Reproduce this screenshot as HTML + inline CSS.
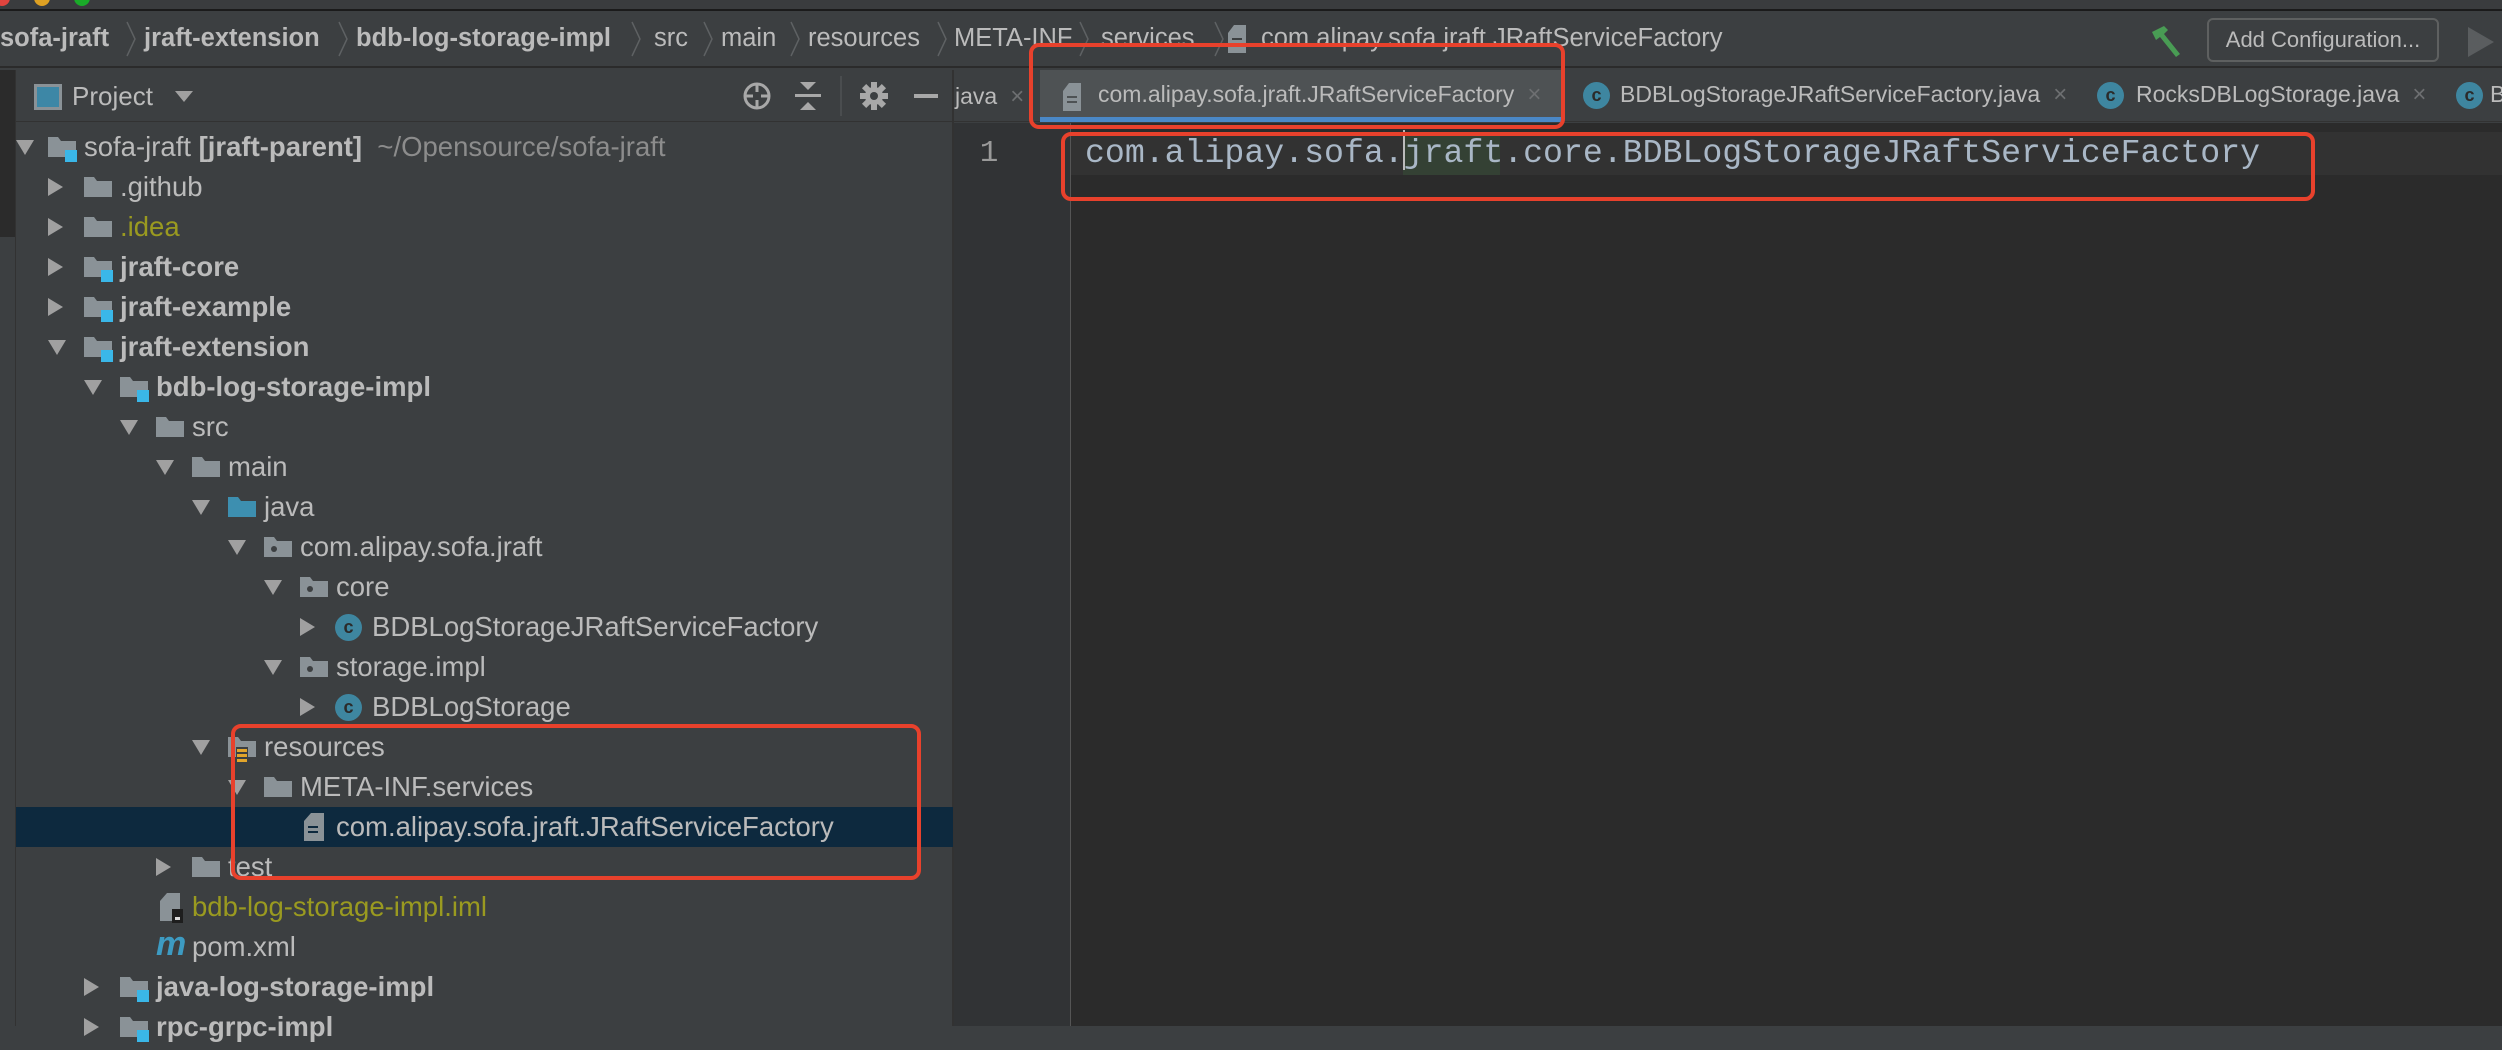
<!DOCTYPE html>
<html><head><meta charset="utf-8"><style>
*{margin:0;padding:0;box-sizing:border-box}
body{width:2502px;height:1026px;overflow:hidden;background:#3c3f41;font-family:"Liberation Sans",sans-serif;color:#bbbbbb;position:relative}
.a{position:absolute;white-space:nowrap}
.bc{font-size:25.5px;top:23px;line-height:30px}
.b{font-weight:bold}
.chev{position:absolute;top:20px;width:12px;height:38px}
.row{position:absolute;left:16px;width:937px;height:40px}
.t{position:absolute;font-size:27.5px;line-height:40px;top:0;white-space:nowrap}
.arrow{position:absolute;top:12px;width:0;height:0}
.down{border-left:9px solid transparent;border-right:9px solid transparent;border-top:15px solid #a0a0a0;top:13px}
.right{border-top:9px solid transparent;border-bottom:9px solid transparent;border-left:15px solid #a0a0a0;top:11px}
.fold{position:absolute;top:10px;width:28px;height:20px}
.cic{position:absolute;top:7px;width:27px;height:27px;border-radius:50%;background:#3e86a0;color:#2b2b2b;font-size:18px;line-height:27px;text-align:center;font-weight:bold}
.red{position:absolute;border:4px solid #e8412c;border-radius:10px}
.tab{position:absolute;top:70px;height:52px;font-size:23px;line-height:52px;white-space:nowrap}
.x{color:#6d6f71;font-size:24px}
</style></head><body>
<div class="a" style="left:0;top:0;width:2502px;height:11px;background:#3a3c3e;border-bottom:2px solid #1b1b1b"></div>
<div class="a" style="left:-6px;top:-10px;width:16px;height:16px;border-radius:50%;background:#e0443e"></div>
<div class="a" style="left:34px;top:-10px;width:16px;height:16px;border-radius:50%;background:#dea123"></div>
<div class="a" style="left:74px;top:-10px;width:16px;height:16px;border-radius:50%;background:#1aab29"></div>
<div class="a" style="left:0;top:13px;width:2502px;height:55px;background:#3c3f41;border-bottom:2px solid #2b2b2b"></div>
<div class="a bc b" style="left:0">sofa-jraft</div>
<svg class="chev" style="left:125px"><path d="M2 2 L10 19 L2 36" stroke="#5e6163" stroke-width="1.5" fill="none"/></svg>
<div class="a bc b" style="left:144px">jraft-extension</div>
<svg class="chev" style="left:337px"><path d="M2 2 L10 19 L2 36" stroke="#5e6163" stroke-width="1.5" fill="none"/></svg>
<div class="a bc b" style="left:356px">bdb-log-storage-impl</div>
<svg class="chev" style="left:630px"><path d="M2 2 L10 19 L2 36" stroke="#5e6163" stroke-width="1.5" fill="none"/></svg>
<div class="a bc" style="left:654px">src</div>
<svg class="chev" style="left:702px"><path d="M2 2 L10 19 L2 36" stroke="#5e6163" stroke-width="1.5" fill="none"/></svg>
<div class="a bc" style="left:721px">main</div>
<svg class="chev" style="left:789px"><path d="M2 2 L10 19 L2 36" stroke="#5e6163" stroke-width="1.5" fill="none"/></svg>
<div class="a bc" style="left:808px">resources</div>
<svg class="chev" style="left:936px"><path d="M2 2 L10 19 L2 36" stroke="#5e6163" stroke-width="1.5" fill="none"/></svg>
<div class="a bc" style="left:954px">META-INF</div>
<svg class="chev" style="left:1078px"><path d="M2 2 L10 19 L2 36" stroke="#5e6163" stroke-width="1.5" fill="none"/></svg>
<div class="a bc" style="left:1101px">services</div>
<svg class="chev" style="left:1213px"><path d="M2 2 L10 19 L2 36" stroke="#5e6163" stroke-width="1.5" fill="none"/></svg>
<svg class="a" style="left:1228px;top:25px" width="18" height="28"><path d="M6 0 H18 V28 H0 V8 Z" fill="#8a9297"/><rect x="4" y="13" width="10" height="2" fill="#3c3f41"/><rect x="4" y="18" width="10" height="2" fill="#3c3f41"/></svg>
<div class="a bc" style="left:1261px">com.alipay.sofa.jraft.JRaftServiceFactory</div>
<svg class="a" style="left:2150px;top:24px" width="36" height="34"><path d="M2 8 L14 2 L18 6 L14 10 L30 30 L26 33 L10 13 L6 16 Z" fill="#499c54"/></svg>
<div class="a" style="left:2207px;top:18px;width:232px;height:44px;border:2px solid #5e6060;border-radius:6px;font-size:22px;line-height:40px;text-align:center;color:#bbbbbb">Add Configuration...</div>
<svg class="a" style="left:2468px;top:27px" width="26" height="30"><path d="M0 0 L26 15 L0 30 Z" fill="#5a5d5f"/></svg>

<div class="a" style="left:0;top:70px;width:16px;height:956px;background:#3c3f41;border-right:1px solid #323232"></div>
<div class="a" style="left:0;top:70px;width:15px;height:167px;background:#2b2b2b"></div>
<div class="a" style="left:16px;top:70px;width:937px;height:52px;background:#3c3f41;border-bottom:1px solid #323232"></div>
<div class="a" style="left:34px;top:84px;width:28px;height:26px;border:3px solid #8a9297;background:#3d87a6"></div>
<div class="a" style="left:72px;top:81px;font-size:26px;line-height:30px">Project</div>
<svg class="a" style="left:175px;top:91px" width="18" height="12"><path d="M0 0 H18 L9 11 Z" fill="#a0a0a0"/></svg>
<svg class="a" style="left:742px;top:81px" width="30" height="30"><circle cx="15" cy="15" r="12" stroke="#a8a8a8" stroke-width="3" fill="none"/><path d="M15 3 V11 M15 19 V27 M3 15 H11 M19 15 H27" stroke="#a8a8a8" stroke-width="3"/></svg>
<svg class="a" style="left:795px;top:82px" width="26" height="28"><path d="M5 0 H21 L13 8 Z M5 28 H21 L13 20 Z" fill="#a8a8a8"/><rect x="0" y="12" width="26" height="3" fill="#a8a8a8"/></svg>
<div class="a" style="left:840px;top:76px;width:2px;height:40px;background:#4a4d4f"></div>
<svg class="a" style="left:860px;top:82px" width="28" height="28"><g fill="#a8a8a8"><circle cx="14" cy="14" r="9"/><rect x="11" y="0" width="6" height="28"/><rect x="0" y="11" width="28" height="6"/><rect x="11" y="0" width="6" height="28" transform="rotate(45 14 14)"/><rect x="11" y="0" width="6" height="28" transform="rotate(-45 14 14)"/></g><circle cx="14" cy="14" r="4" fill="#3c3f41"/></svg>
<div class="a" style="left:914px;top:94px;width:24px;height:4px;background:#a8a8a8"></div>
<div class="a" style="left:952px;top:70px;width:2px;height:956px;background:#323232"></div>

<div class="a" style="left:16px;top:807px;width:937px;height:40px;background:#0d293e"></div>

<div class="row" style="top:127px"><div class="arrow down" style="left:0px"></div><div class="fold" style="left:32px"><svg width="30" height="28"><path d="M0 0 H10 L13 4 H28 V20 H0 Z" fill="#8a9297"/><rect x="17" y="13" width="12" height="12" fill="#3ab7e8"/></svg></div><div class="t" style="left:68px">sofa-jraft <b>[jraft-parent]</b> <span style="color:#8c8c8c">&nbsp;~/Opensource/sofa-jraft</span></div></div>
<div class="row" style="top:167px"><div class="arrow right" style="left:32px"></div><div class="fold" style="left:68px"><svg width="28" height="20"><path d="M0 0 H10 L13 4 H28 V20 H0 Z" fill="#8a9297"/></svg></div><div class="t" style="left:104px">.github</div></div>
<div class="row" style="top:207px"><div class="arrow right" style="left:32px"></div><div class="fold" style="left:68px"><svg width="28" height="20"><path d="M0 0 H10 L13 4 H28 V20 H0 Z" fill="#8a9297"/></svg></div><div class="t" style="left:104px;color:#9a9a20">.idea</div></div>
<div class="row" style="top:247px"><div class="arrow right" style="left:32px"></div><div class="fold" style="left:68px"><svg width="30" height="28"><path d="M0 0 H10 L13 4 H28 V20 H0 Z" fill="#8a9297"/><rect x="17" y="13" width="12" height="12" fill="#3ab7e8"/></svg></div><div class="t b" style="left:104px">jraft-core</div></div>
<div class="row" style="top:287px"><div class="arrow right" style="left:32px"></div><div class="fold" style="left:68px"><svg width="30" height="28"><path d="M0 0 H10 L13 4 H28 V20 H0 Z" fill="#8a9297"/><rect x="17" y="13" width="12" height="12" fill="#3ab7e8"/></svg></div><div class="t b" style="left:104px">jraft-example</div></div>
<div class="row" style="top:327px"><div class="arrow down" style="left:32px"></div><div class="fold" style="left:68px"><svg width="30" height="28"><path d="M0 0 H10 L13 4 H28 V20 H0 Z" fill="#8a9297"/><rect x="17" y="13" width="12" height="12" fill="#3ab7e8"/></svg></div><div class="t b" style="left:104px">jraft-extension</div></div>
<div class="row" style="top:367px"><div class="arrow down" style="left:68px"></div><div class="fold" style="left:104px"><svg width="30" height="28"><path d="M0 0 H10 L13 4 H28 V20 H0 Z" fill="#8a9297"/><rect x="17" y="13" width="12" height="12" fill="#3ab7e8"/></svg></div><div class="t b" style="left:140px">bdb-log-storage-impl</div></div>
<div class="row" style="top:407px"><div class="arrow down" style="left:104px"></div><div class="fold" style="left:140px"><svg width="28" height="20"><path d="M0 0 H10 L13 4 H28 V20 H0 Z" fill="#8a9297"/></svg></div><div class="t" style="left:176px">src</div></div>
<div class="row" style="top:447px"><div class="arrow down" style="left:140px"></div><div class="fold" style="left:176px"><svg width="28" height="20"><path d="M0 0 H10 L13 4 H28 V20 H0 Z" fill="#8a9297"/></svg></div><div class="t" style="left:212px">main</div></div>
<div class="row" style="top:487px"><div class="arrow down" style="left:176px"></div><div class="fold" style="left:212px"><svg width="28" height="20"><path d="M0 0 H10 L13 4 H28 V20 H0 Z" fill="#3d8fb0"/></svg></div><div class="t" style="left:248px">java</div></div>
<div class="row" style="top:527px"><div class="arrow down" style="left:212px"></div><div class="fold" style="left:248px"><svg width="28" height="20"><path d="M0 0 H10 L13 4 H28 V20 H0 Z" fill="#8a9297"/><circle cx="10" cy="12" r="3" fill="#3c3f41"/></svg></div><div class="t" style="left:284px">com.alipay.sofa.jraft</div></div>
<div class="row" style="top:567px"><div class="arrow down" style="left:248px"></div><div class="fold" style="left:284px"><svg width="28" height="20"><path d="M0 0 H10 L13 4 H28 V20 H0 Z" fill="#8a9297"/><circle cx="10" cy="12" r="3" fill="#3c3f41"/></svg></div><div class="t" style="left:320px">core</div></div>
<div class="row" style="top:607px"><div class="arrow right" style="left:284px"></div><div class="cic" style="left:319px">c</div><div class="t" style="left:356px">BDBLogStorageJRaftServiceFactory</div></div>
<div class="row" style="top:647px"><div class="arrow down" style="left:248px"></div><div class="fold" style="left:284px"><svg width="28" height="20"><path d="M0 0 H10 L13 4 H28 V20 H0 Z" fill="#8a9297"/><circle cx="10" cy="12" r="3" fill="#3c3f41"/></svg></div><div class="t" style="left:320px">storage.impl</div></div>
<div class="row" style="top:687px"><div class="arrow right" style="left:284px"></div><div class="cic" style="left:319px">c</div><div class="t" style="left:356px">BDBLogStorage</div></div>
<div class="row" style="top:727px"><div class="arrow down" style="left:176px"></div><div class="fold" style="left:212px"><svg width="28" height="30"><path d="M0 0 H10 L13 4 H28 V20 H0 Z" fill="#8a9297"/><rect x="8" y="10" width="12" height="18" fill="#3c3f41"/><g fill="#e2a52b"><rect x="9" y="12" width="10" height="3"/><rect x="9" y="17" width="10" height="3"/><rect x="9" y="22" width="10" height="3"/></g></svg></div><div class="t" style="left:248px">resources</div></div>
<div class="row" style="top:767px"><div class="arrow down" style="left:212px"></div><div class="fold" style="left:248px"><svg width="28" height="20"><path d="M0 0 H10 L13 4 H28 V20 H0 Z" fill="#8a9297"/></svg></div><div class="t" style="left:284px">META-INF.services</div></div>
<div class="row" style="top:807px"><svg class="a" style="left:288px;top:6px" width="20" height="28"><path d="M7 0 H20 V28 H0 V8 Z" fill="#8a9297"/><rect x="4" y="13" width="10" height="2" fill="#0d293e"/><rect x="4" y="18" width="10" height="2" fill="#0d293e"/></svg><div class="t" style="left:320px">com.alipay.sofa.jraft.JRaftServiceFactory</div></div>
<div class="row" style="top:847px"><div class="arrow right" style="left:140px"></div><div class="fold" style="left:176px"><svg width="28" height="20"><path d="M0 0 H10 L13 4 H28 V20 H0 Z" fill="#8a9297"/></svg></div><div class="t" style="left:212px">test</div></div>
<div class="row" style="top:887px"><svg class="a" style="left:144px;top:6px" width="24" height="30"><path d="M7 0 H20 V28 H0 V8 Z" fill="#8a9297"/><rect x="12" y="16" width="11" height="14" fill="#1e1e1e"/><rect x="15" y="24" width="5" height="3" fill="#ddd"/></svg><div class="t" style="left:176px;color:#9a9a20">bdb-log-storage-impl.iml</div></div>
<div class="row" style="top:927px"><div class="t" style="left:140px;color:#3d9bc2;font-weight:bold;font-style:italic;font-size:34px;top:-3px">m</div><div class="t" style="left:176px">pom.xml</div></div>
<div class="row" style="top:967px"><div class="arrow right" style="left:68px"></div><div class="fold" style="left:104px"><svg width="30" height="28"><path d="M0 0 H10 L13 4 H28 V20 H0 Z" fill="#8a9297"/><rect x="17" y="13" width="12" height="12" fill="#3ab7e8"/></svg></div><div class="t b" style="left:140px">java-log-storage-impl</div></div>
<div class="row" style="top:1007px"><div class="arrow right" style="left:68px"></div><div class="fold" style="left:104px"><svg width="30" height="28"><path d="M0 0 H10 L13 4 H28 V20 H0 Z" fill="#8a9297"/><rect x="17" y="13" width="12" height="12" fill="#3ab7e8"/></svg></div><div class="t b" style="left:140px">rpc-grpc-impl</div></div>

<div class="a" style="left:954px;top:70px;width:1548px;height:52px;background:#3c3f41;border-bottom:1px solid #323232"></div>
<div class="tab" style="left:955px">java <span class="x">&nbsp;×</span></div>
<div class="a" style="left:1040px;top:70px;width:522px;height:52px;background:#4e5254"></div>
<div class="a" style="left:1040px;top:117px;width:522px;height:5px;background:#4a88c7"></div>
<svg class="a" style="left:1063px;top:83px" width="18" height="28"><path d="M6 0 H18 V28 H0 V8 Z" fill="#8a9297"/><rect x="4" y="13" width="10" height="2" fill="#4e5254"/><rect x="4" y="18" width="10" height="2" fill="#4e5254"/></svg>
<div class="tab" style="left:1098px;top:68px">com.alipay.sofa.jraft.JRaftServiceFactory <span class="x">&nbsp;×</span></div>
<div class="cic" style="left:1583px;top:82px">c</div>
<div class="tab" style="left:1620px;top:68px">BDBLogStorageJRaftServiceFactory.java <span class="x">&nbsp;×</span></div>
<div class="cic" style="left:2097px;top:82px">c</div>
<div class="tab" style="left:2136px;top:68px">RocksDBLogStorage.java <span class="x">&nbsp;×</span></div>
<div class="cic" style="left:2456px;top:82px">c</div>
<div class="tab" style="left:2490px;top:68px">B</div>

<div class="a" style="left:954px;top:123px;width:116px;height:903px;background:#313335"></div>
<div class="a" style="left:1070px;top:123px;width:1432px;height:903px;background:#2b2b2b;border-left:1px solid #555"></div>
<div class="a" style="left:1071px;top:132px;width:1431px;height:43px;background:#323232"></div>
<div class="a" style="left:964px;top:132px;font-family:'Liberation Mono',monospace;font-size:31px;line-height:43px;color:#9a9a9a;width:50px;text-align:center">1</div>
<div class="a" style="left:1403px;top:132px;width:97px;height:43px;background:#344134"></div>
<div class="a" style="left:1085px;top:132px;font-family:'Liberation Mono',monospace;font-size:33.2px;line-height:43px;color:#a9b7c6">com.alipay.sofa.jraft.core.BDBLogStorageJRaftServiceFactory</div>
<div class="a" style="left:1403px;top:130px;width:2px;height:40px;background:#bbbbbb"></div>

<div class="red" style="left:1029px;top:43px;width:536px;height:86px"></div>
<div class="red" style="left:1061px;top:132px;width:1254px;height:69px"></div>
<div class="red" style="left:231px;top:724px;width:690px;height:156px"></div>
</body></html>
